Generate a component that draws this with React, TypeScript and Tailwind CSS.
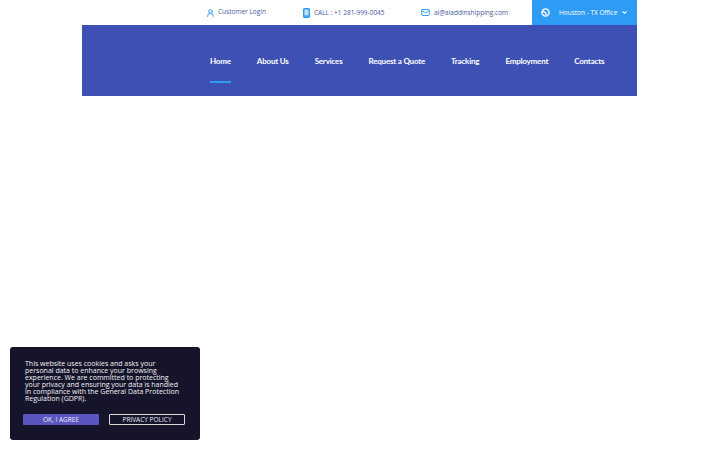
import { ChevronDown, Mail, UserRound } from "lucide-react";

const navLinks = ["Home", "About Us", "Services", "Request a Quote", "Tracking", "Employment", "Contacts"];

function OfficeIcon() {
  return (
    <svg viewBox="0 0 16 16" className="h-[9px] w-[9px] text-white" fill="none" stroke="currentColor" strokeWidth="2.4">
      <circle cx="8" cy="8" r="6.4" />
      <path d="M3 6 8 8l1 5" strokeWidth="2.4" />
    </svg>
  );
}

function PhoneIcon() {
  return (
    <svg viewBox="0 0 7 10" className="mr-[4px] h-[10px] w-[7px]" fill="none">
      <rect x="0.7" y="0.7" width="5.6" height="8.6" rx="0.8" fill="#bfe0fb" stroke="#2f9bf0" strokeWidth="1.4" />
      <path d="M1 8h5" stroke="#2f9bf0" strokeWidth="1.2" />
    </svg>
  );
}

export default function App() {
  return (
    <div className="relative h-[450px] w-[720px] overflow-hidden bg-white font-['Open_Sans',sans-serif]">
      <header className="ml-[82px] w-[555px]">
        <div className="flex h-[25px] items-center pl-[124px] whitespace-nowrap text-[6.5px] text-[#4a5a9c]">
          <a className="flex w-[97px] items-center">
            <UserRound className="mr-[3px] h-[10px] w-[9px] text-[#2f9bf0]" strokeWidth={2.5} />
            <span className="relative -top-px">Customer Login</span>
          </a>
          <a className="flex w-[118px] items-center">
            <PhoneIcon />
            CALL : +1 281-999-0045
          </a>
          <a className="flex w-[111px] items-center">
            <Mail className="mr-[4px] h-[9px] w-[9px] text-[#2f9bf0]" strokeWidth={2.5} />
            al@aladdinshipping.com
          </a>
          <div className="flex h-full w-[105px] items-center bg-[#2e9bf5] pl-[9px] text-white">
            <OfficeIcon />
            <span className="ml-[9px]">Houston - TX Office</span>
            <ChevronDown className="ml-[4px] h-[7px] w-[7px]" strokeWidth={3.5} />
          </div>
        </div>
        <nav className="flex h-[71px] items-stretch gap-[26px] whitespace-nowrap bg-[#3d50b4] pl-[128px] font-['Lato',sans-serif] tracking-[-0.2px]">
          {navLinks.map((link, i) => (
            <a
              key={link}
              className={`mb-[13px] flex items-center border-b-2 pt-[15px] text-[8px] font-bold text-white ${
                i === 0 ? "border-[#2e9bf5]" : "border-transparent"
              }`}
            >
              {link}
            </a>
          ))}
        </nav>
      </header>

      <div className="absolute left-[10px] top-[347px] h-[93px] w-[190px] rounded-[3px] bg-[#15142a] pl-[15px] pr-[15px] pt-[13px]">
        <p className="text-[7px] leading-[7px] text-[#f2f2f2]">
          This website uses cookies and asks your personal data to enhance your browsing experience. We are committed to
          protecting your privacy and ensuring your data is handled in compliance with the General Data Protection
          Regulation (GDPR).
        </p>
        <div className="-ml-[2px] mt-[12px] flex gap-[10px]">
          <button className="flex h-[11px] w-[76px] items-center justify-center rounded-[1px] bg-[#5a55c0] text-[6.5px] text-[#e8e8f5]">
            OK, I AGREE
          </button>
          <button className="flex h-[11px] w-[76px] items-center justify-center rounded-[1px] border border-[#d8d8d8] text-[6.5px] text-[#e8e8f5]">
            PRIVACY POLICY
          </button>
        </div>
      </div>
    </div>
  );
}
